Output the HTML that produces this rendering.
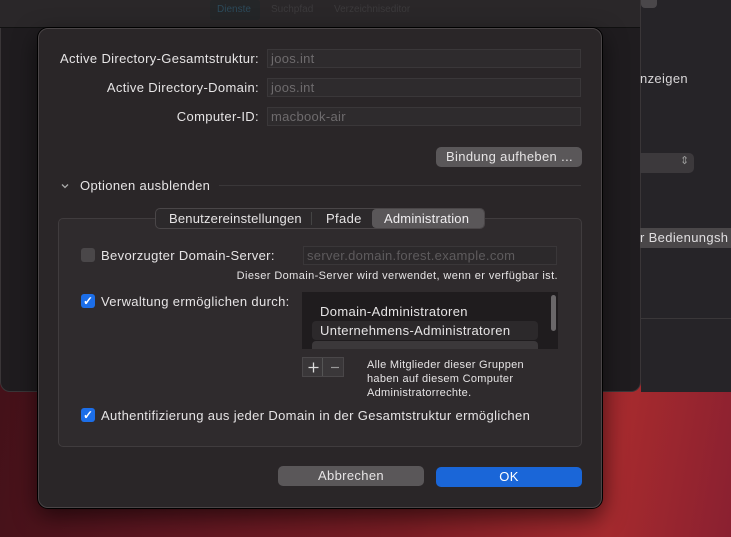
<!DOCTYPE html>
<html><head><meta charset="utf-8"><style>
*{margin:0;padding:0;box-sizing:border-box}
body{width:731px;height:537px;overflow:hidden;position:relative;font-family:"Liberation Sans",sans-serif;background:linear-gradient(100deg,#3a0f16 0%,#5c1620 30%,#7a1d24 60%,#a52a2e 85%,#8a2030 100%);}
.a{position:absolute}
.t{color:#e6e4e5;font-size:13px;white-space:nowrap;position:absolute;letter-spacing:.35px}
.field{position:absolute;background:#2e2b2d;border:1px solid #3a3739;color:#6e6b6d;font-size:13px;padding-left:3px;line-height:17px;letter-spacing:.3px}
.cb{position:absolute;width:14px;height:14px;border-radius:3px;background:#1c6ee8;color:#fff;font-size:12px;line-height:14px;text-align:center;font-weight:bold}
</style></head><body>
<div class="a" style="left:0;top:0;width:641px;height:392px;background:#1f1c1f;border-radius:0 0 10px 10px;border:1px solid #3a3638;border-top:none"></div>
<div class="a" style="left:0;top:0;width:640px;height:28px;background:#2a2729;border-bottom:1px solid #111"></div>
<div class="a" style="left:210px;top:0;width:50px;height:20px;background:#242628;border-radius:3px"></div>
<div class="t" style="left:217px;top:4px;font-size:10px;color:#2c4a5a;letter-spacing:0">Dienste</div>
<div class="t" style="left:271px;top:4px;font-size:10px;color:#3c3a3c;letter-spacing:0">Suchpfad</div>
<div class="t" style="left:334px;top:4px;font-size:10px;color:#3c3a3c;letter-spacing:0">Verzeichniseditor</div>
<div class="a" style="left:641px;top:0;width:90px;height:392px;background:#262428"></div>
<div class="a" style="left:641px;top:0;width:16px;height:8px;background:#4a474a;border-radius:0 0 4px 4px"></div>
<div class="t" style="left:640px;top:71px;color:#d8d6d8">nzeigen</div>
<div class="a" style="left:640px;top:153px;width:54px;height:20px;background:#3c393c;border-radius:0 5px 5px 0"></div>
<div class="t" style="left:680px;top:154px;font-size:11px;color:#999">⇕</div>
<div class="a" style="left:640px;top:228px;width:91px;height:20px;background:#4a4749"></div>
<div class="t" style="left:640px;top:230px;color:#e0dee0">r Bedienungsh</div>
<div class="a" style="left:641px;top:318px;width:90px;height:1px;background:#3a3739"></div>
<div class="a" style="left:38px;top:28px;width:564px;height:480px;background:#2a2628;border:1px solid #4a4547;border-radius:10px;box-shadow:0 0 0 1px #000,0 8px 24px rgba(0,0,0,.6)"></div>
<div class="t" style="right:472px;top:51px">Active Directory-Gesamtstruktur:</div>
<div class="t" style="right:472px;top:80px">Active Directory-Domain:</div>
<div class="t" style="right:472px;top:109px">Computer-ID:</div>
<div class="field" style="left:267px;top:49px;width:314px;height:19px">joos.int</div>
<div class="field" style="left:267px;top:78px;width:314px;height:19px">joos.int</div>
<div class="field" style="left:267px;top:107px;width:314px;height:19px">macbook-air</div>
<div class="a" style="left:436px;top:147px;width:146px;height:20px;background:#5a5759;border-radius:5px"></div>
<div class="t" style="left:446px;top:149px">Bindung aufheben ...</div>
<svg class="a" style="left:60px;top:182px" width="10" height="8"><path d="M2 2.5 L5 5.5 L8 2.5" stroke="#aaa" stroke-width="1.3" fill="none"/></svg>
<div class="t" style="left:80px;top:178px">Optionen ausblenden</div>
<div class="a" style="left:219px;top:185px;width:362px;height:1px;background:#3a3739"></div>
<div class="a" style="left:58px;top:218px;width:524px;height:229px;background:#2f2b2d;border:1px solid #403c3e;border-radius:5px"></div>
<div class="a" style="left:155px;top:208px;width:330px;height:21px;background:#2c292b;border:1px solid #4a4648;border-radius:5px"></div>
<div class="a" style="left:372px;top:209px;width:112px;height:19px;background:#5a5759;border-radius:4px"></div>
<div class="a" style="left:311px;top:212px;width:1px;height:13px;background:#444"></div>
<div class="t" style="left:169px;top:211px;letter-spacing:.2px">Benutzereinstellungen</div>
<div class="t" style="left:326px;top:211px">Pfade</div>
<div class="t" style="left:384px;top:211px;color:#f0eef0;letter-spacing:.2px">Administration</div>
<div class="a" style="left:81px;top:248px;width:14px;height:14px;border-radius:3px;background:#4a4749"></div>
<div class="t" style="left:101px;top:248px">Bevorzugter Domain-Server:</div>
<div class="field" style="left:303px;top:246px;width:254px;height:19px;background:#2c292b;color:#5e5b5d">server.domain.forest.example.com</div>
<div class="t" style="right:173px;top:270px;font-size:11px;letter-spacing:.4px">Dieser Domain-Server wird verwendet, wenn er verfügbar ist.</div>
<div class="cb" style="left:81px;top:294px">✓</div>
<div class="t" style="left:101px;top:294px">Verwaltung ermöglichen durch:</div>
<div class="a" style="left:302px;top:292px;width:256px;height:57px;background:#1f1c1e"></div>
<div class="a" style="left:312px;top:321px;width:226px;height:19px;background:#2c292b;border-radius:4px"></div>
<div class="a" style="left:312px;top:341px;width:226px;height:8px;background:#3b383a;border-radius:4px 4px 0 0"></div>
<div class="a" style="left:551px;top:295px;width:5px;height:36px;background:#6a6769;border-radius:3px"></div>
<div class="t" style="left:320px;top:304px">Domain-Administratoren</div>
<div class="t" style="left:320px;top:323px">Unternehmens-Administratoren</div>
<div class="a" style="left:302px;top:357px;width:42px;height:20px;background:#3a3739;border:1px solid #4a4749"></div>
<div class="a" style="left:322px;top:358px;width:1px;height:18px;background:#555"></div>
<svg class="a" style="left:302px;top:357px" width="42" height="20"><path d="M11.5 5.5V15.5M6.5 10.5H16.5" stroke="#ddd" stroke-width="1.3"/><path d="M29 10.5H37" stroke="#999" stroke-width="1.2"/></svg>
<div class="t" style="left:367px;top:358px;font-size:11px;line-height:14px;letter-spacing:.3px">Alle Mitglieder dieser Gruppen<br>haben auf diesem Computer<br>Administratorrechte.</div>
<div class="cb" style="left:81px;top:408px">✓</div>
<div class="t" style="left:101px;top:408px">Authentifizierung aus jeder Domain in der Gesamtstruktur ermöglichen</div>
<div class="a" style="left:278px;top:466px;width:146px;height:20px;background:#5a5759;border-radius:5px"></div>
<div class="t" style="left:278px;top:468px;width:146px;text-align:center">Abbrechen</div>
<div class="a" style="left:436px;top:467px;width:146px;height:20px;background:#1a66d8;border-radius:5px"></div>
<div class="t" style="left:436px;top:469px;width:146px;text-align:center;color:#fff">OK</div>
</body></html>
